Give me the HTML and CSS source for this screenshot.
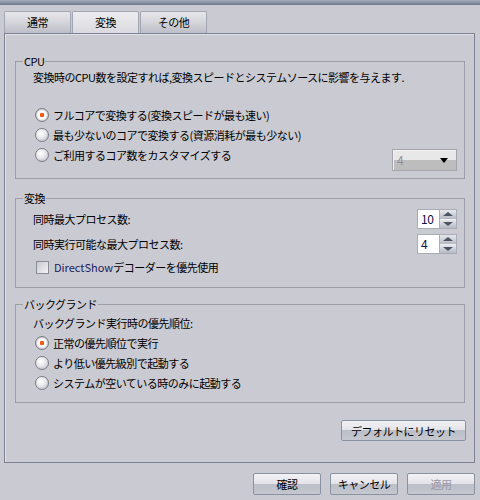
FILE: index.html
```html
<!DOCTYPE html>
<html>
<head>
<meta charset="utf-8">
<link rel="stylesheet" href="styles.css">
</head>
<body>
	<div class="titlebar"></div>
	<div class="tabs">
		<div class="tab">通常</div>
		<div class="tab active">変換</div>
		<div class="tab">その他</div>
	</div>
	<div class="panel">
		<fieldset class="group cpu">
			<legend>CPU</legend>
			<p class="desc">変換時のCPU数を設定すれば,変換スピードとシステムソースに影響を与えます.</p>
			<div class="options">
				<div class="row"><span class="radio on"></span>フルコアで変換する(変換スピードが最も速い)</div>
				<div class="row"><span class="radio"></span>最も少ないのコアで変換する(資源消耗が最も少ない)</div>
				<div class="row custom"><span class="radio"></span>ご利用するコア数をカスタマイズする
					<div class="combo"><span class="combo-val">4</span><span class="caret"></span></div>
				</div>
			</div>
		</fieldset>

		<fieldset class="group convert">
			<legend>変換</legend>
			<div class="field">
				<span class="label">同時最大プロセス数:</span>
				<div class="spin"><span class="spin-val">10</span><span class="spin-btns"><span class="up"></span><span class="down"></span></span></div>
			</div>
			<div class="field">
				<span class="label">同時実行可能な最大プロセス数:</span>
				<div class="spin"><span class="spin-val">4</span><span class="spin-btns"><span class="up"></span><span class="down"></span></span></div>
			</div>
			<div class="row check-row"><span class="check"></span><span><span class="brand">DirectShow</span>デコーダーを優先使用</span></div>
		</fieldset>

		<fieldset class="group background">
			<legend>バックグランド</legend>
			<p class="desc">バックグランド実行時の優先順位:</p>
			<div class="row"><span class="radio on"></span>正常の優先順位で実行</div>
			<div class="row"><span class="radio"></span>より低い優先級別で起動する</div>
			<div class="row"><span class="radio"></span>システムが空いている時のみに起動する</div>
		</fieldset>

		<div class="reset-row">
			<button class="btn reset">デフォルトにリセット</button>
		</div>
	</div>
	<div class="footer">
		<button class="btn">確認</button>
		<button class="btn">キャンセル</button>
		<button class="btn disabled">適用</button>
	</div>
</body>
</html>
```

FILE: styles.css
```css
body {
	margin: 0;
	background: #cacad2;
	font-family: "Noto Sans CJK JP", "Noto Sans", sans-serif;
	font-size: 11px;
	letter-spacing: -0.5px;
	color: #000;
}
.titlebar {
	height: 5px;
	background: linear-gradient(#a6aebe, #6e788a);
}
.tabs {
	display: flex;
	gap: 1px;
	margin: 6px 0 0 4px;
	height: 22px;
}
.tab {
	width: 67px;
	box-sizing: border-box;
	border: 1px solid #a2a6b2;
	border-bottom: none;
	border-radius: 2px 2px 0 0;
	background: linear-gradient(#e6e6ea, #d6d6dc 45%, #bebec8);
	text-align: center;
	line-height: 21px;
}
.tab.active {
	background: linear-gradient(#ececf0, #dadae0);
}
.panel {
	margin: 0 5px 0 4px;
	height: 430px;
	box-sizing: border-box;
	border: 1px solid #7a8294;
	box-shadow: inset 1px 1px 0 #e0e0e6;
	padding: 20px 9px 0 10px;
}
.group {
	margin: 0;
	padding: 0 7px 0 7px;
	border: 1px solid #9e9ea6;
	min-width: 0;
}
.group legend {
	padding: 0 1px;
	line-height: 14px;
}
.desc {
	margin: 0;
	padding-left: 10px;
	line-height: 18px;
}
.options {
	margin-top: 19px;
}
.row {
	display: flex;
	align-items: center;
	gap: 4px;
	height: 20px;
	padding-left: 12px;
}
.radio {
	flex: none;
	width: 14px;
	height: 14px;
	box-sizing: border-box;
	border-radius: 50%;
	border: 1px solid #7c7c86;
	background: radial-gradient(circle at 40% 35%, #ffffff, #e8e8ec 45%, #aeaeb8);
}
.radio.on {
	background: radial-gradient(circle at 50% 50%, #f25c14 0 2px, transparent 2.6px),
		radial-gradient(circle at 50% 50%, #ffffff 0 4px, #c6c6ce 6px);
}
.cpu {
	padding-bottom: 7px;
}
.row.custom {
	height: auto;
	align-items: flex-start;
	line-height: 20px;
}
.row.custom .radio {
	margin-top: 3px;
}
.combo {
	margin: 4px 0 0 auto;
	width: 65px;
	height: 22px;
	box-sizing: border-box;
	border: 1px solid #a4a4aa;
	box-shadow: inset 1px 1px 0 #f2f2f2;
	background: linear-gradient(#e8e8e8 50%, #bdbdbd 50%);
	display: flex;
	align-items: center;
	justify-content: space-between;
	padding: 0 8px 0 4px;
	line-height: 18px;
}
.combo-val {
	color: #8e8ea2;
	font-size: 12px;
}
.caret {
	border-left: 4px solid transparent;
	border-right: 4px solid transparent;
	border-top: 5px solid #000;
}
.convert {
	margin-top: 12px;
	padding-bottom: 10px;
}
.field {
	display: flex;
	align-items: center;
	height: 20px;
	padding-left: 10px;
	margin-top: 4px;
}
.field + .field {
	margin-top: 5px;
}
.field .label {
	flex: 1;
}
.spin {
	display: flex;
	height: 20px;
}
.spin-val {
	width: 23px;
	box-sizing: border-box;
	border: 1px solid #a8acb6;
	background: #fff;
	padding-left: 3px;
	line-height: 18px;
	font-size: 12px;
	color: #101048;
}
.spin-btns {
	width: 17px;
	display: flex;
	flex-direction: column;
	box-sizing: border-box;
	border: 1px solid #a8acb6;
	border-left: none;
}
.spin-btns span {
	flex: 1;
	display: flex;
	align-items: center;
	justify-content: center;
	background: linear-gradient(#e6e8ec, #b6bac4);
}
.spin-btns span + span {
	border-top: 1px solid #f0f0f4;
}
.spin-btns .up::before {
	content: "";
	border-left: 5px solid transparent;
	border-right: 5px solid transparent;
	border-bottom: 4px solid #4c5464;
}
.spin-btns .down::before {
	content: "";
	border-left: 5px solid transparent;
	border-right: 5px solid transparent;
	border-top: 4px solid #4c5464;
}
.check-row {
	margin-top: 3px;
	padding-left: 13px;
	gap: 4px;
}
.check {
	flex: none;
	width: 13px;
	height: 13px;
	box-sizing: border-box;
	border: 1px solid #8c8c98;
	background: linear-gradient(135deg, #c8c8d0, #f4f4f6);
	margin-right: 1px;
}
.brand {
	color: #1c1c5c;
	letter-spacing: 0;
}
.background {
	margin-top: 9px;
	padding-bottom: 9px;
}
.background .desc {
	margin-top: 2px;
	line-height: 20px;
}
.reset-row {
	display: flex;
	justify-content: flex-end;
	margin: 17px -1px 0 0;
}
.btn {
	width: 68px;
	height: 22px;
	box-sizing: border-box;
	padding: 0;
	border: 1px solid #8a92a2;
	border-radius: 2px;
	background: linear-gradient(#f2f2f6, #e2e2e8 50%, #bcbec8 50%, #c6c8d0);
	font: inherit;
	letter-spacing: -0.5px;
	color: #000;
}
.btn.reset {
	width: 125px;
	height: 21px;
}
.btn.disabled {
	color: #9a9aa8;
}
.footer {
	display: flex;
	justify-content: flex-end;
	gap: 9px;
	margin-top: 10px;
	padding-right: 5px;
}
```
